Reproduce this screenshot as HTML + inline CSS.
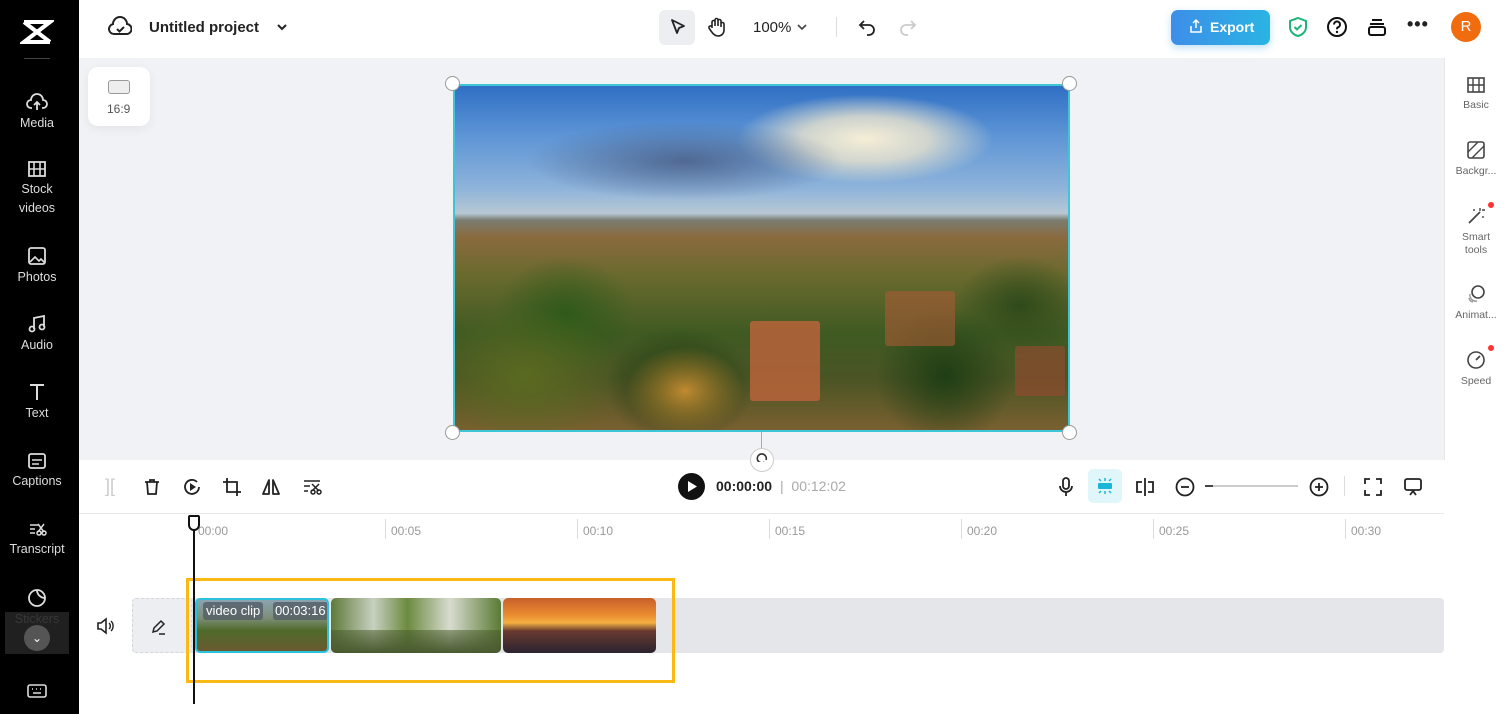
<!DOCTYPE html>
<html><head><meta charset="utf-8"><style>
*{margin:0;padding:0;box-sizing:border-box}
body{width:1508px;height:714px;overflow:hidden;background:#fff;font-family:"Liberation Sans",sans-serif;position:relative}
.a{position:absolute}
.side{left:0;top:0;width:79px;height:714px;background:#000}
.si{position:absolute;left:0;width:74px;text-align:center;color:#ddd;font-size:12.5px;line-height:19px}
.si svg{display:block;margin:0 auto 2px}
.rp{left:1444px;top:58px;width:64px;height:656px;background:#fff}
.ri{position:absolute;left:0;width:64px;text-align:center;color:#666;font-size:10.5px;line-height:13px}
.ri svg{display:block;margin:0 auto 5px}
.lab{position:absolute;top:524px;font-size:12px;color:#999}
.t{position:absolute;border-radius:50%}
</style></head><body>
<div class="a side">
 <svg class="a" style="left:20px;top:18px" width="34" height="28" viewBox="0 0 34 28"><path d="M4 4h26L4 24h26M4 4l26 20M4 24L30 4" stroke="#fff" stroke-width="4" fill="none"/></svg>
 <div class="a" style="left:24px;top:58px;width:26px;height:1px;background:#444"></div>
 <div class="si" style="top:92px"><svg width="22" height="20" viewBox="0 0 22 20"><path d="M6 16H5a4 4 0 0 1 0-8 6 6 0 0 1 12 0 4 4 0 0 1 0 8h-1M11 18v-8M8 13l3-3 3 3" stroke="#ddd" stroke-width="1.8" fill="none"/></svg>Media</div>
 <div class="si" style="top:160px"><svg width="20" height="18" viewBox="0 0 20 18"><rect x="2" y="2" width="16" height="14" stroke="#ddd" stroke-width="1.8" fill="none"/><path d="M7 2v14M13 2v14M2 9h16" stroke="#ddd" stroke-width="1.6"/></svg>Stock<br>videos</div>
 <div class="si" style="top:246px"><svg width="20" height="20" viewBox="0 0 20 20"><rect x="2" y="2" width="16" height="16" rx="2" stroke="#ddd" stroke-width="1.8" fill="none"/><path d="M3 16l5-5 4 4 2-2 4 4" stroke="#ddd" stroke-width="1.6" fill="none"/></svg>Photos</div>
 <div class="si" style="top:314px"><svg width="20" height="20" viewBox="0 0 20 20"><path d="M7 15V4l10-2v11" stroke="#ddd" stroke-width="1.8" fill="none"/><circle cx="5" cy="15" r="2.5" stroke="#ddd" stroke-width="1.8" fill="none"/><circle cx="15" cy="13" r="2.5" stroke="#ddd" stroke-width="1.8" fill="none"/></svg>Audio</div>
 <div class="si" style="top:382px"><svg width="20" height="20" viewBox="0 0 20 20"><path d="M3 3h14M10 3v15" stroke="#ddd" stroke-width="2" fill="none"/></svg>Text</div>
 <div class="si" style="top:452px"><svg width="20" height="18" viewBox="0 0 20 18"><rect x="2" y="2" width="16" height="14" rx="2" stroke="#ddd" stroke-width="1.8" fill="none"/><path d="M5 8h10M5 12h7" stroke="#ddd" stroke-width="1.6"/></svg>Captions</div>
 <div class="si" style="top:520px"><svg width="20" height="18" viewBox="0 0 20 18"><path d="M3 5h8M3 9h5M3 13h5" stroke="#ddd" stroke-width="1.6"/><circle cx="12" cy="13" r="2" stroke="#ddd" fill="none" stroke-width="1.5"/><circle cx="17" cy="13" r="2" stroke="#ddd" fill="none" stroke-width="1.5"/><path d="M11 4l6 8M17 4l-6 8" stroke="#ddd" stroke-width="1.5"/></svg>Transcript</div>
 <div class="si" style="top:588px;color:#777"><svg width="20" height="20" viewBox="0 0 20 20"><circle cx="10" cy="10" r="8" stroke="#ddd" stroke-width="1.8" fill="none"/><path d="M10 2a8 8 0 0 0 8 8" stroke="#ddd" stroke-width="1.8" fill="none"/></svg>Stickers</div>
 <div class="a" style="left:5px;top:612px;width:64px;height:42px;background:rgba(40,40,40,.8)"></div>
 <div class="a" style="left:24px;top:625px;width:26px;height:26px;border-radius:13px;background:#555;color:#fff;font-size:12px;text-align:center;line-height:26px">⌄</div>
 <svg class="a" style="left:27px;top:683px" width="20" height="16" viewBox="0 0 20 16"><rect x="1" y="2" width="18" height="12" rx="2" stroke="#ddd" stroke-width="1.6" fill="none"/><path d="M5 6h1M9 6h1M13 6h1M6 10h8" stroke="#ddd" stroke-width="1.6"/></svg>
 <div class="a" style="left:79px;top:342px;width:9px;height:60px;background:#222;border-radius:0 6px 6px 0"></div>
</div>
<svg class="a" style="left:108px;top:16px" width="24" height="22" viewBox="0 0 24 22"><path d="M7 18H6a5 5 0 0 1-1-9.9A7 7 0 0 1 19 8a5 5 0 0 1-1 10H7z" stroke="#222" stroke-width="2" fill="none"/><path d="M9 13l2.5 2.5L16 11" stroke="#222" stroke-width="2" fill="none"/></svg>
<div class="a" style="left:149px;top:19px;font-size:15px;font-weight:bold;color:#222">Untitled project</div>
<svg class="a" style="left:276px;top:22px" width="12" height="10"><path d="M2 3l4 4 4-4" stroke="#222" stroke-width="2" fill="none"/></svg>
<div class="a" style="left:659px;top:10px;width:36px;height:35px;background:#eceef1;border-radius:6px"></div>
<svg class="a" style="left:668px;top:17px" width="20" height="20" viewBox="0 0 20 20"><path d="M4 3l12 6-5 2-2 5z" stroke="#222" stroke-width="1.8" fill="none" stroke-linejoin="round"/></svg>
<svg class="a" style="left:706px;top:16px" width="22" height="22" viewBox="0 0 22 22"><path d="M6 12V6a1.5 1.5 0 0 1 3 0v4V4a1.5 1.5 0 0 1 3 0v6V5a1.5 1.5 0 0 1 3 0v6V8a1.5 1.5 0 0 1 3 0v6c0 4-3 6-6 6s-5-2-7-5l-2-3a1.5 1.5 0 0 1 3-1z" stroke="#222" stroke-width="1.6" fill="none"/></svg>
<div class="a" style="left:753px;top:19px;font-size:15px;color:#222">100%</div>
<svg class="a" style="left:796px;top:22px" width="12" height="10"><path d="M2 3l4 4 4-4" stroke="#444" stroke-width="1.6" fill="none"/></svg>
<div class="a" style="left:836px;top:17px;width:1px;height:20px;background:#ddd"></div>
<svg class="a" style="left:857px;top:17px" width="20" height="20" viewBox="0 0 20 20"><path d="M7 4L3 8l4 4M3 8h9a5 5 0 0 1 0 10h-2" stroke="#222" stroke-width="1.8" fill="none"/></svg>
<svg class="a" style="left:898px;top:17px" width="20" height="20" viewBox="0 0 20 20"><path d="M13 4l4 4-4 4M17 8H8a5 5 0 0 0 0 10h2" stroke="#ccc" stroke-width="1.8" fill="none"/></svg>
<div class="a" style="left:1171px;top:10px;width:99px;height:35px;border-radius:7px;background:linear-gradient(90deg,#3d8ee8,#2ab4e4);color:#fff;font-weight:bold;font-size:14px;line-height:35px;padding-left:39px;box-shadow:0 3px 8px rgba(40,150,230,.3)">Export</div>
<svg class="a" style="left:1188px;top:18px" width="16" height="16" viewBox="0 0 16 16"><path d="M8 10V2M5 5l3-3 3 3M3 8v6h10V8" stroke="#fff" stroke-width="1.5" fill="none"/></svg>
<svg class="a" style="left:1287px;top:16px" width="22" height="22" viewBox="0 0 22 22"><path d="M11 2l8 3v6c0 5-4 8-8 9-4-1-8-4-8-9V5z" stroke="#1fb57a" stroke-width="2" fill="none"/><path d="M7.5 11l2.5 2.5 4.5-4.5" stroke="#1fb57a" stroke-width="2" fill="none"/></svg>
<svg class="a" style="left:1326px;top:16px" width="22" height="22" viewBox="0 0 22 22"><circle cx="11" cy="11" r="9" stroke="#111" stroke-width="2" fill="none"/><path d="M8 8.5a3 3 0 1 1 4 2.8c-1 .4-1 1-1 2" stroke="#111" stroke-width="2" fill="none"/><circle cx="11" cy="16" r="1.2" fill="#111"/></svg>
<svg class="a" style="left:1367px;top:17px" width="20" height="20" viewBox="0 0 20 20"><path d="M5 3h10M3 7h14" stroke="#111" stroke-width="2"/><rect x="2" y="10" width="16" height="8" rx="2" stroke="#111" stroke-width="2" fill="none"/></svg>
<div class="a" style="left:1407px;top:14px;font-size:18px;font-weight:bold;color:#222;letter-spacing:1px">•••</div>
<div class="a" style="left:1451px;top:12px;width:30px;height:30px;border-radius:15px;background:#f06c0f;color:#fff;text-align:center;line-height:30px;font-size:15px">R</div>
<div class="a" style="left:79px;top:58px;width:1365px;height:402px;background:#f0f2f5"></div>
<div class="a" style="left:88px;top:67px;width:62px;height:59px;background:#fff;border-radius:10px;box-shadow:0 3px 10px rgba(0,0,0,.06)"></div>
<div class="a" style="left:108px;top:80px;width:22px;height:14px;border:1.5px solid #999;border-radius:3px;background:#eee"></div>
<div class="a" style="left:107px;top:102px;font-size:12px;color:#555">16:9</div>
<div class="a" style="left:453px;top:84px;width:617px;height:348px;border:2px solid #3cc6d8;overflow:hidden;background:linear-gradient(180deg,#2f6fc4 0%,#5f96d6 15%,#8fb4da 30%,#b8c8d4 37%,#7a7d70 39%,#8a6a3e 44%,#6a6a2e 55%,#3f5a22 72%,#4a5424 85%,#7a6030 100%)">
 <div class="a" style="left:280px;top:8px;width:260px;height:90px;border-radius:50%;background:radial-gradient(ellipse,#f6eed6 0%,rgba(235,228,205,.8) 35%,rgba(150,160,180,0) 70%)"></div>
 <div class="a" style="left:70px;top:35px;width:320px;height:80px;border-radius:50%;background:radial-gradient(ellipse,rgba(70,90,130,.8) 0%,rgba(80,100,140,0) 70%)"></div>
 <div class="t" style="left:40px;top:170px;width:140px;height:120px;background:radial-gradient(ellipse,#2f5a1a,rgba(40,70,20,0) 70%)"></div>
 <div class="t" style="left:-30px;top:220px;width:200px;height:140px;background:radial-gradient(ellipse,#5a6a20,rgba(60,70,20,0) 70%)"></div>
 <div class="t" style="left:150px;top:240px;width:150px;height:120px;background:radial-gradient(ellipse,#1f3a12,rgba(30,50,15,0) 70%)"></div>
 <div class="t" style="left:420px;top:220px;width:140px;height:140px;background:radial-gradient(ellipse,#1f3e14,rgba(30,50,15,0) 70%)"></div>
 <div class="t" style="left:170px;top:260px;width:120px;height:90px;background:radial-gradient(ellipse,#c08a30,rgba(190,130,40,0) 70%)"></div>
 <div class="t" style="left:500px;top:170px;width:130px;height:100px;background:radial-gradient(ellipse,#2f4a1a,rgba(40,70,20,0) 70%)"></div>
 <div class="a" style="left:295px;top:235px;width:70px;height:80px;background:#b8633a;opacity:.85;border-radius:3px"></div>
 <div class="a" style="left:430px;top:205px;width:70px;height:55px;background:#a85a35;opacity:.6;border-radius:3px"></div>
 <div class="a" style="left:560px;top:260px;width:50px;height:50px;background:#9a4a30;opacity:.6;border-radius:3px"></div>
</div>
<div class="a" style="left:445px;top:76px;width:15px;height:15px;border-radius:8px;background:#fff;border:1px solid #999"></div>
<div class="a" style="left:1062px;top:76px;width:15px;height:15px;border-radius:8px;background:#fff;border:1px solid #999"></div>
<div class="a" style="left:445px;top:425px;width:15px;height:15px;border-radius:8px;background:#fff;border:1px solid #999"></div>
<div class="a" style="left:1062px;top:425px;width:15px;height:15px;border-radius:8px;background:#fff;border:1px solid #999"></div>
<div class="a" style="left:761px;top:432px;width:1px;height:18px;background:#aaa"></div>
<div class="a" style="left:750px;top:448px;width:24px;height:24px;border-radius:12px;background:#fff;border:1px solid #ccc"></div>
<svg class="a" style="left:755px;top:452px" width="14" height="10" viewBox="0 0 14 10"><path d="M11 8a4.5 4.5 0 1 0-1.5 2" stroke="#333" stroke-width="1.6" fill="none"/></svg>
<div class="a rp">
 <div class="ri" style="top:18px"><svg width="20" height="18" viewBox="0 0 20 18"><rect x="2" y="2" width="16" height="14" stroke="#444" stroke-width="1.6" fill="none"/><path d="M7 2v14M13 2v14M2 9h16" stroke="#444" stroke-width="1.4"/></svg>Basic</div>
 <div class="ri" style="top:82px"><svg width="20" height="20" viewBox="0 0 20 20"><rect x="2" y="2" width="16" height="16" rx="2" stroke="#444" stroke-width="1.6" fill="none"/><path d="M2 12L12 2M6 18L18 6" stroke="#444" stroke-width="1.4"/></svg>Backgr...</div>
 <div class="ri" style="top:148px"><svg width="20" height="20" viewBox="0 0 20 20"><path d="M3 17L14 6" stroke="#444" stroke-width="1.8"/><path d="M14 2v3M16 4h3M8 3v2M17 10v2" stroke="#444" stroke-width="1.4"/></svg>Smart<br>tools</div>
 <div class="a" style="left:44px;top:144px;width:6px;height:6px;border-radius:3px;background:#f33"></div>
 <div class="ri" style="top:226px"><svg width="20" height="20" viewBox="0 0 20 20"><circle cx="12" cy="8" r="6" stroke="#444" stroke-width="1.6" fill="none"/><path d="M4 10a6 6 0 0 0 7 7M3 14a5 5 0 0 0 4 4" stroke="#999" stroke-width="1.4" fill="none"/></svg>Animat...</div>
 <div class="ri" style="top:292px"><svg width="20" height="20" viewBox="0 0 20 20"><circle cx="10" cy="10" r="8" stroke="#444" stroke-width="1.6" fill="none"/><path d="M10 10l4-4" stroke="#444" stroke-width="1.8"/></svg>Speed</div>
 <div class="a" style="left:44px;top:287px;width:6px;height:6px;border-radius:3px;background:#f33"></div>
</div>
<div class="a" style="left:1444px;top:58px;width:1px;height:402px;background:#e6e6e6"></div>
<div class="a" style="left:79px;top:513px;width:1365px;height:1px;background:#e6e8eb"></div>
<div class="a" style="left:105px;top:476px;font-size:18px;color:#ccc">][</div>
<svg class="a" style="left:142px;top:477px" width="20" height="20" viewBox="0 0 20 20"><path d="M3 5h14M8 5V3h4v2M5 5l1 12h8l1-12" stroke="#222" stroke-width="1.8" fill="none"/></svg>
<svg class="a" style="left:182px;top:477px" width="20" height="20" viewBox="0 0 20 20"><path d="M17 10a7 7 0 1 1-2-5" stroke="#222" stroke-width="1.8" fill="none"/><path d="M8 6l6 4-6 4z" fill="#222"/></svg>
<svg class="a" style="left:222px;top:477px" width="20" height="20" viewBox="0 0 20 20"><path d="M5 1v14h14M1 5h14v14" stroke="#222" stroke-width="1.8" fill="none"/></svg>
<svg class="a" style="left:261px;top:477px" width="20" height="20" viewBox="0 0 20 20"><path d="M8 3L2 17h6zM12 3l6 14h-6z" stroke="#222" stroke-width="1.8" fill="none" stroke-linejoin="round"/></svg>
<svg class="a" style="left:302px;top:477px" width="20" height="20" viewBox="0 0 20 20"><path d="M2 4h16M2 9h6M2 14h4" stroke="#222" stroke-width="1.6"/><circle cx="11" cy="15" r="2" stroke="#222" fill="none" stroke-width="1.5"/><circle cx="17" cy="15" r="2" stroke="#222" fill="none" stroke-width="1.5"/><path d="M10 7l7 7M17 7l-7 7" stroke="#222" stroke-width="1.5"/></svg>
<div class="a" style="left:678px;top:473px;width:27px;height:27px;border-radius:14px;background:#111"></div>
<svg class="a" style="left:687px;top:480px" width="12" height="13"><path d="M1 1l9 5.5L1 12z" fill="#fff"/></svg>
<div class="a" style="left:716px;top:478px;font-size:14px;font-weight:bold;color:#222">00:00:00</div>
<div class="a" style="left:780px;top:478px;font-size:14px;color:#aaa">| &nbsp;00:12:02</div>
<svg class="a" style="left:1056px;top:476px" width="20" height="22" viewBox="0 0 20 22"><rect x="7" y="2" width="6" height="11" rx="3" stroke="#222" stroke-width="1.8" fill="none"/><path d="M4 10a6 6 0 0 0 12 0M10 16v4" stroke="#222" stroke-width="1.8" fill="none"/></svg>
<div class="a" style="left:1088px;top:469px;width:34px;height:34px;background:#e1f6fa;border-radius:5px"></div>
<svg class="a" style="left:1095px;top:476px" width="20" height="20" viewBox="0 0 20 20"><rect x="3" y="7" width="14" height="6" rx="1" fill="#1ab6d6"/><path d="M10 2v3M10 15v3M4 3l2 2M16 3l-2 2M4 17l2-2M16 17l-2-2" stroke="#1ab6d6" stroke-width="1.5"/></svg>
<svg class="a" style="left:1134px;top:476px" width="22" height="22" viewBox="0 0 22 22"><path d="M11 2v18M8 6H3v10h5M14 6h5v10h-5" stroke="#222" stroke-width="1.8" fill="none"/></svg>
<svg class="a" style="left:1174px;top:476px" width="22" height="22" viewBox="0 0 22 22"><circle cx="11" cy="11" r="8.5" stroke="#222" stroke-width="1.8" fill="none"/><path d="M7 11h8" stroke="#222" stroke-width="1.8"/></svg>
<div class="a" style="left:1205px;top:485px;width:93px;height:1.5px;background:#ccc"></div>
<div class="a" style="left:1205px;top:485px;width:8px;height:2px;background:#444"></div>
<svg class="a" style="left:1308px;top:476px" width="22" height="22" viewBox="0 0 22 22"><circle cx="11" cy="11" r="8.5" stroke="#222" stroke-width="1.8" fill="none"/><path d="M7 11h8M11 7v8" stroke="#222" stroke-width="1.8"/></svg>
<div class="a" style="left:1344px;top:476px;width:1px;height:20px;background:#ddd"></div>
<svg class="a" style="left:1363px;top:477px" width="20" height="20" viewBox="0 0 20 20"><path d="M2 7V2h5M13 2h5v5M18 13v5h-5M7 18H2v-5" stroke="#222" stroke-width="1.8" fill="none"/></svg>
<svg class="a" style="left:1402px;top:476px" width="22" height="22" viewBox="0 0 22 22"><rect x="3" y="3" width="16" height="11" rx="2" stroke="#222" stroke-width="1.8" fill="none"/><path d="M8 19l3-4 3 4" stroke="#222" stroke-width="1.8" fill="none"/></svg>
<div class="lab" style="left:198px">00:00</div><div class="lab" style="left:391px">00:05</div><div class="lab" style="left:583px">00:10</div><div class="lab" style="left:775px">00:15</div><div class="lab" style="left:967px">00:20</div><div class="lab" style="left:1159px">00:25</div><div class="lab" style="left:1351px">00:30</div>
<div class="a" style="left:385px;top:519px;width:1px;height:20px;background:#ddd"></div>
<div class="a" style="left:577px;top:519px;width:1px;height:20px;background:#ddd"></div>
<div class="a" style="left:769px;top:519px;width:1px;height:20px;background:#ddd"></div>
<div class="a" style="left:961px;top:519px;width:1px;height:20px;background:#ddd"></div>
<div class="a" style="left:1153px;top:519px;width:1px;height:20px;background:#ddd"></div>
<div class="a" style="left:1345px;top:519px;width:1px;height:20px;background:#ddd"></div>
<svg class="a" style="left:96px;top:617px" width="20" height="18" viewBox="0 0 20 18"><path d="M2 6h3l5-4v14l-5-4H2z" stroke="#222" stroke-width="1.6" fill="none"/><path d="M13 6a4 4 0 0 1 0 6M15 4a7 7 0 0 1 0 10" stroke="#222" stroke-width="1.4" fill="none"/></svg>
<div class="a" style="left:132px;top:598px;width:1312px;height:55px;background:#e4e6ea;border-radius:4px"></div>
<div class="a" style="left:132px;top:598px;width:60px;height:55px;background:#eceef1;border:1px dashed #d4d6da;border-radius:4px"></div>
<svg class="a" style="left:150px;top:618px" width="18" height="18" viewBox="0 0 18 18"><path d="M3 14l1-4 7-7 3 3-7 7zM9 16h6" stroke="#222" stroke-width="1.5" fill="none"/></svg>
<div class="a" style="left:195px;top:598px;width:134px;height:55px;border:2px solid #2bc2dc;border-radius:5px;overflow:hidden;background:linear-gradient(180deg,#8aa4b0 0%,#7e8e78 35%,#4f6a2a 60%,#6a5a30 100%)">
 <div class="a" style="left:6px;top:2px;height:18px;background:rgba(80,90,100,.75);color:#fff;font-size:13px;line-height:18px;padding:0 3px;border-radius:3px">video clip</div>
 <div class="a" style="left:76px;top:2px;height:18px;background:rgba(80,90,100,.75);color:#fff;font-size:13px;line-height:18px;padding:0 2px;border-radius:3px">00:03:16</div>
</div>
<div class="a" style="left:331px;top:598px;width:170px;height:55px;border-radius:5px;background:linear-gradient(90deg,#5e7a3a,#c8d0c0 25%,#6c8a40 45%,#d8dcd0 70%,#5a7a34);"></div>
<div class="a" style="left:331px;top:630px;width:170px;height:23px;border-radius:0 0 5px 5px;background:linear-gradient(180deg,rgba(70,90,40,.5),#4a5a30)"></div>
<div class="a" style="left:503px;top:598px;width:153px;height:55px;border-radius:5px;background:linear-gradient(180deg,#c8602a 0%,#e98a30 30%,#f4b040 45%,#6a3a30 60%,#2a2430 100%)"></div>
<div class="a" style="left:186px;top:578px;width:489px;height:105px;border:3px solid #fdb913"></div>
<div class="a" style="left:193px;top:520px;width:2px;height:184px;background:#111"></div>
<div class="a" style="left:188px;top:515px;width:12px;height:16px;background:#fff;border:2px solid #111;border-radius:2px 2px 6px 6px"></div>
</body></html>
